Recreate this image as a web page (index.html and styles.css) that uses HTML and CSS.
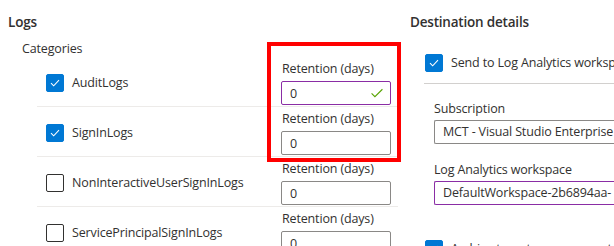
FILE: index.html
```html
<!DOCTYPE html>
<html>
<head>
<meta charset="utf-8">
<link rel="stylesheet" href="styles.css">
</head>
<body>
<div class="page">
  <section class="logs">
    <h2 class="heading">Logs</h2>
    <div class="cat-title">Categories</div>
    <div class="rows">
      <div class="row">
        <label class="check"><span class="box on"><svg viewBox="0 0 18 18"><path d="M4.5 9.2l3 3 6-6.4" /></svg></span><span>AuditLogs</span></label>
        <div class="field">
          <div class="flabel">Retention (days)</div>
          <div class="input valid"><span>0</span><svg class="ok" viewBox="0 0 16 12"><path d="M1.5 6.5l4 4 9-9" /></svg></div>
        </div>
      </div>
      <div class="row">
        <label class="check"><span class="box on"><svg viewBox="0 0 18 18"><path d="M4.5 9.2l3 3 6-6.4" /></svg></span><span>SignInLogs</span></label>
        <div class="field">
          <div class="flabel">Retention (days)</div>
          <div class="input"><span>0</span></div>
        </div>
      </div>
      <div class="row">
        <label class="check"><span class="box"></span><span>NonInteractiveUserSignInLogs</span></label>
        <div class="field">
          <div class="flabel">Retention (days)</div>
          <div class="input"><span>0</span></div>
        </div>
      </div>
      <div class="row">
        <label class="check"><span class="box"></span><span>ServicePrincipalSignInLogs</span></label>
        <div class="field">
          <div class="flabel">Retention (days)</div>
          <div class="input"><span>0</span></div>
        </div>
      </div>
    </div>
    <div class="highlight"></div>
  </section>
  <section class="dest">
    <h2 class="heading">Destination details</h2>
    <div class="dest-check">
      <label class="check"><span class="box on"><svg viewBox="0 0 18 18"><path d="M4.5 9.2l3 3 6-6.4" /></svg></span><span>Send to Log Analytics workspace</span></label>
    </div>
    <div class="dest-body">
      <div class="dlabel">Subscription</div>
      <div class="select">MCT - Visual Studio Enterprise</div>
      <div class="dlabel second">Log Analytics workspace</div>
      <div class="select purple">DefaultWorkspace-2b6894aa-</div>
    </div>
    <div class="archive">
      <label class="check"><span class="box on"><svg viewBox="0 0 18 18"><path d="M4.5 9.2l3 3 6-6.4" /></svg></span><span>Archive to a storage account</span></label>
    </div>
  </section>
</div>
</body>
</html>
```

FILE: styles.css
```css
html, body {
  margin: 0;
  padding: 0;
  background: #ffffff;
}
body {
  width: 614px;
  height: 246px;
  overflow: hidden;
  font-family: "Open Sans", "Noto Sans", "Liberation Sans", sans-serif;
  font-size: 12.5px;
  letter-spacing: -0.15px;
  color: #323130;
}
.page {
  display: flex;
  width: 614px;
  height: 246px;
  overflow: hidden;
}
.logs {
  position: relative;
  width: 410px;
  flex: none;
}
.heading {
  margin: 0;
  font-size: 13.5px;
  font-weight: 600;
  line-height: 20px;
  padding-top: 12px;
  letter-spacing: -0.2px;
}
.logs .heading {
  padding-left: 8px;
}
.cat-title {
  padding-left: 22px;
  margin-top: 8px;
  line-height: 18px;
}
.rows {
  margin-left: 37px;
  width: 361px;
  margin-top: -1px;
}
.row {
  display: flex;
  align-items: flex-start;
  justify-content: space-between;
  height: 50px;
  border-bottom: 1px solid #edebe9;
  box-sizing: border-box;
}
.row:last-child {
  border-bottom: none;
}
.check {
  display: flex;
  align-items: center;
  gap: 8px;
  line-height: 18px;
  white-space: nowrap;
}
.rows .check {
  padding-left: 9px;
  margin-top: 17px;
}
.box {
  width: 16px;
  height: 16px;
  border: 1px solid #323130;
  border-radius: 2px;
  flex: none;
  display: flex;
}
.box.on {
  background: #0078d4;
  border-color: #0078d4;
}
.box svg {
  width: 16px;
  height: 16px;
  fill: none;
  stroke: #ffffff;
  stroke-width: 1.2;
}
.field {
  width: 110px;
  margin-right: 7px;
  padding-top: 3px;
}
.flabel {
  line-height: 18px;
  padding-left: 1px;
  margin-bottom: 3px;
  white-space: nowrap;
}
.input {
  height: 24px;
  box-sizing: border-box;
  border: 1px solid #8a8886;
  border-radius: 2px;
  display: flex;
  align-items: center;
  justify-content: space-between;
  padding: 0 6px 0 8px;
}
.input.valid {
  border-color: #8a2da5;
}
.ok {
  width: 14px;
  height: 10px;
  fill: none;
  stroke: #57a300;
  stroke-width: 1.3;
}
.highlight {
  position: absolute;
  left: 267px;
  top: 42px;
  width: 134px;
  height: 120px;
  box-sizing: border-box;
  border: 4px solid #ff0000;
}
.dest {
  flex: 1;
  min-width: 0;
}
.dest-check {
  margin-left: 14px;
  margin-top: 22px;
  height: 29px;
  border-bottom: 1px solid #d2d0ce;
  display: flex;
  align-items: flex-start;
  padding-left: 1px;
  white-space: nowrap;
}
.dest-body {
  padding-left: 24px;
  padding-top: 16px;
}
.dlabel {
  line-height: 18px;
  margin-bottom: 2px;
  white-space: nowrap;
}
.dlabel.second {
  margin-top: 17px;
}
.select {
  height: 24px;
  box-sizing: border-box;
  border: 1px solid #8a8886;
  border-right: none;
  border-radius: 2px 0 0 2px;
  padding-left: 8px;
  line-height: 22px;
  white-space: nowrap;
  overflow: hidden;
}
.select.purple {
  border-color: #8a2da5;
}
.archive {
  margin-left: 15px;
  margin-top: 35px;
}
```
